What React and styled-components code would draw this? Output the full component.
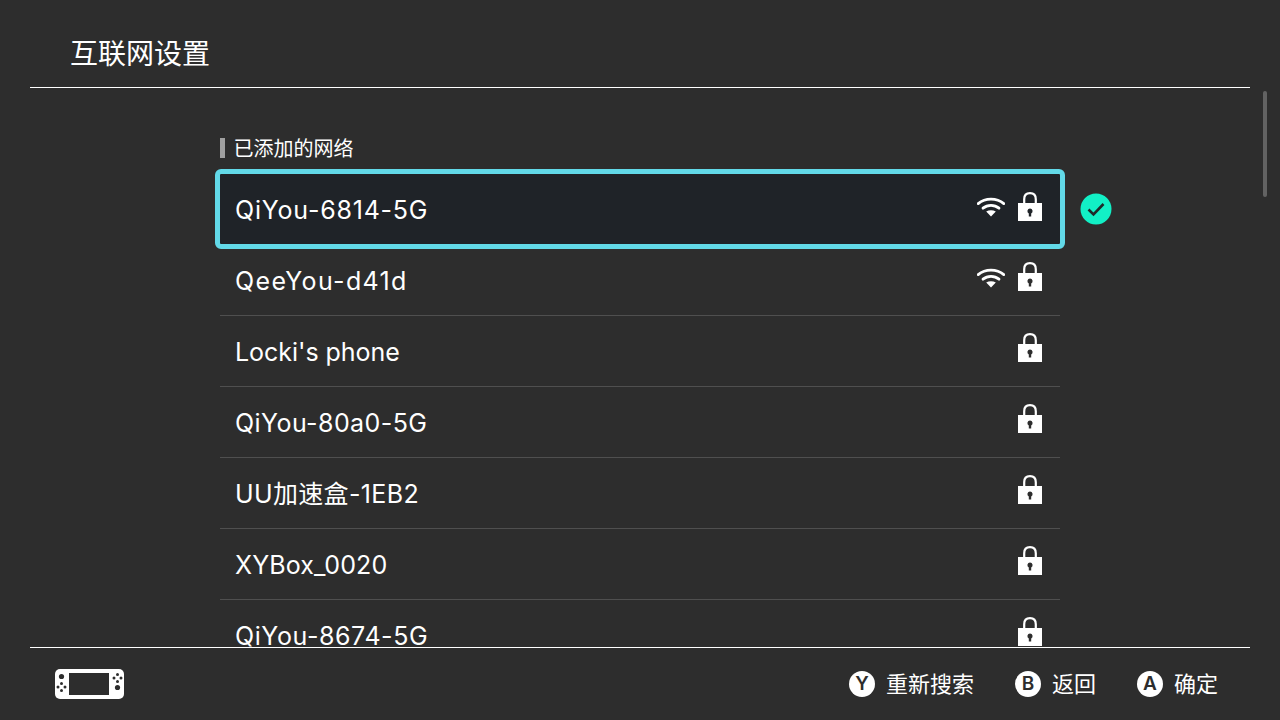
import React from 'react'
import styled, { createGlobalStyle } from 'styled-components'

const GlobalStyle = createGlobalStyle`
  html, body { margin: 0; padding: 0; background: #2d2d2d; }
  * { box-sizing: border-box; }
`

const Page = styled.div`
  width: 1280px;
  height: 720px;
  display: flex;
  flex-direction: column;
  position: relative;
  overflow: hidden;
  background: #2d2d2d;
  color: #fff;
  font-family: Inter, "Noto Sans CJK SC", sans-serif;
`

const Header = styled.header`
  flex: none;
  height: 88px;
  margin: 0 30px;
  padding: 20px 0 0 40px;
  display: flex;
  align-items: center;
  border-bottom: 1px solid #fff;
`

const Title = styled.h1`
  margin: 0;
  font-size: 28px;
  font-weight: 400;
  line-height: 36px;
`

const Main = styled.main`
  flex: 1;
  min-height: 0;
  overflow: hidden;
  padding: 50px 0 0 220px;
`

const SectionLabel = styled.div`
  width: 840px;
  height: 20px;
  margin-bottom: 16px;
  padding: 1px 0 0 8.5px;
  border-left: 5px solid #a0a0a0;
  font-size: 20px;
  line-height: 20px;
`

const List = styled.div`
  width: 840px;
  display: flex;
  flex-direction: column;
`

const Row = styled.div`
  position: relative;
  flex: none;
  height: 71px;
  padding: 0 18px 1px 15px;
  display: flex;
  align-items: center;
  justify-content: space-between;
  border-bottom: 1px solid #4f4f4f;
  ${p => p.$selected && `
    height: 70px;
    margin-bottom: 1px;
    border-bottom: none;
    padding-bottom: 0;
    background: #1f2328;
    outline: 5px solid #62d9e8;
    border-radius: 1px;
  `}
`

const Name = styled.span`
  margin-top: 2px;
  font-size: 25px;
  line-height: 34px;
  letter-spacing: ${p => p.$track || 0}px;
`

const Icons = styled.span`
  display: flex;
  align-items: center;
  gap: 13px;
  margin-top: -6px;
`

const WifiSlot = styled.span`
  width: 28px;
  height: 20px;
  display: block;
  margin-top: 2px;
`

const Connected = styled.span`
  position: absolute;
  left: 860px;
  top: 19px;
  width: 32px;
  height: 32px;
`

const Scrollbar = styled.div`
  position: absolute;
  left: 1263px;
  top: 91px;
  width: 4px;
  height: 106px;
  border-radius: 2px;
  background: #626262;
`

const Footer = styled.footer`
  flex: none;
  height: 73px;
  margin: 0 30px;
  padding: 0 32px 0 25px;
  display: flex;
  align-items: center;
  border-top: 1px solid #fff;
`

const Actions = styled.div`
  margin-left: auto;
  display: flex;
  align-items: center;
  gap: 41px;
`

const Action = styled.div`
  display: flex;
  align-items: center;
  gap: 11px;
  font-size: 22px;
  line-height: 28px;
`

const Glyph = styled.span`
  width: 26px;
  height: 26px;
  border-radius: 50%;
  background: #fff;
  color: #2d2d2d;
  display: flex;
  align-items: center;
  justify-content: center;
  font-size: 19px;
  font-weight: 600;
  line-height: 26px;
`

function Wifi() {
  return (
    <svg width="28" height="20" viewBox="0 0 28 20" fill="none" stroke="#fff" strokeWidth="2.8" strokeLinecap="round">
      <path d="M1.2 6.6C8.4 .6 19.6 .6 26.8 6.6" />
      <path d="M6 11.2C10.6 7.4 17.4 7.4 22 11.2" />
      <path d="M9.2 14.4C12 12.8 16 12.8 18.8 14.4L14 19.6Z" fill="#fff" stroke="none" />
    </svg>
  )
}

function Lock() {
  return (
    <svg width="24" height="29" viewBox="0 0 24 29" style={{ display: 'block' }}>
      <path d="M6.2 12V7.2C6.2 3.4 8.6 1.2 12 1.2S17.8 3.4 17.8 7.2V12" fill="none" stroke="#fff" strokeWidth="2.2" />
      <path
        fillRule="evenodd"
        fill="#fff"
        d="M0 11H24V29H0ZM12 16.6A2.6 2.6 0 0 0 10.8 21.5V24.6H13.2V21.5A2.6 2.6 0 0 0 12 16.6Z"
      />
    </svg>
  )
}

function Check() {
  return (
    <svg width="32" height="32" viewBox="0 0 32 32">
      <circle cx="16" cy="16" r="15.5" fill="#12f0c6" />
      <path d="M8.5 16.5L13.5 21.5L23.5 11" fill="none" stroke="#1f2a2a" strokeWidth="2.6" />
    </svg>
  )
}

function ConsoleIcon() {
  return (
    <svg width="69" height="30" viewBox="0 0 69 30" style={{ display: 'block' }}>
      <rect width="69" height="30" rx="5" fill="#fff" />
      <rect x="14" y="4" width="40" height="22" fill="#2d2d2d" />
      <g fill="#2d2d2d">
        <circle cx="6.5" cy="7.5" r="2.6" />
        <circle cx="6.5" cy="14.5" r="1.5" />
        <circle cx="3" cy="18" r="1.5" />
        <circle cx="10" cy="18" r="1.5" />
        <circle cx="6.5" cy="21.5" r="1.5" />
        <circle cx="62.5" cy="5.5" r="1.5" />
        <circle cx="59" cy="9" r="1.5" />
        <circle cx="66" cy="9" r="1.5" />
        <circle cx="62.5" cy="12.5" r="1.5" />
        <circle cx="62.5" cy="18.5" r="2.6" />
      </g>
    </svg>
  )
}

const networks = [
  { name: 'QiYou-6814-5G', wifi: true, selected: true, track: 0.78 },
  { name: 'QeeYou-d41d', wifi: true, track: 1.35 },
  { name: "Locki's phone", track: -0.05 },
  { name: 'QiYou-80a0-5G', track: 0.42 },
  { name: 'UU加速盒-1EB2', track: 0.35 },
  { name: 'XYBox_0020', track: 0.1 },
  { name: 'QiYou-8674-5G', track: 0.58 },
]

const actions = [
  { key: 'Y', label: '重新搜索' },
  { key: 'B', label: '返回' },
  { key: 'A', label: '确定' },
]

export default function App() {
  return (
    <Page>
      <GlobalStyle />
      <Header>
        <Title>互联网设置</Title>
      </Header>
      <Main>
        <SectionLabel>已添加的网络</SectionLabel>
        <List>
          {networks.map(n => (
            <Row key={n.name} $selected={n.selected}>
              <Name $track={n.track}>{n.name}</Name>
              <Icons>
                {n.wifi && (
                  <WifiSlot>
                    <Wifi />
                  </WifiSlot>
                )}
                <Lock />
              </Icons>
              {n.selected && (
                <Connected>
                  <Check />
                </Connected>
              )}
            </Row>
          ))}
        </List>
      </Main>
      <Scrollbar />
      <Footer>
        <ConsoleIcon />
        <Actions>
          {actions.map(a => (
            <Action key={a.key}>
              <Glyph>{a.key}</Glyph>
              {a.label}
            </Action>
          ))}
        </Actions>
      </Footer>
    </Page>
  )
}
